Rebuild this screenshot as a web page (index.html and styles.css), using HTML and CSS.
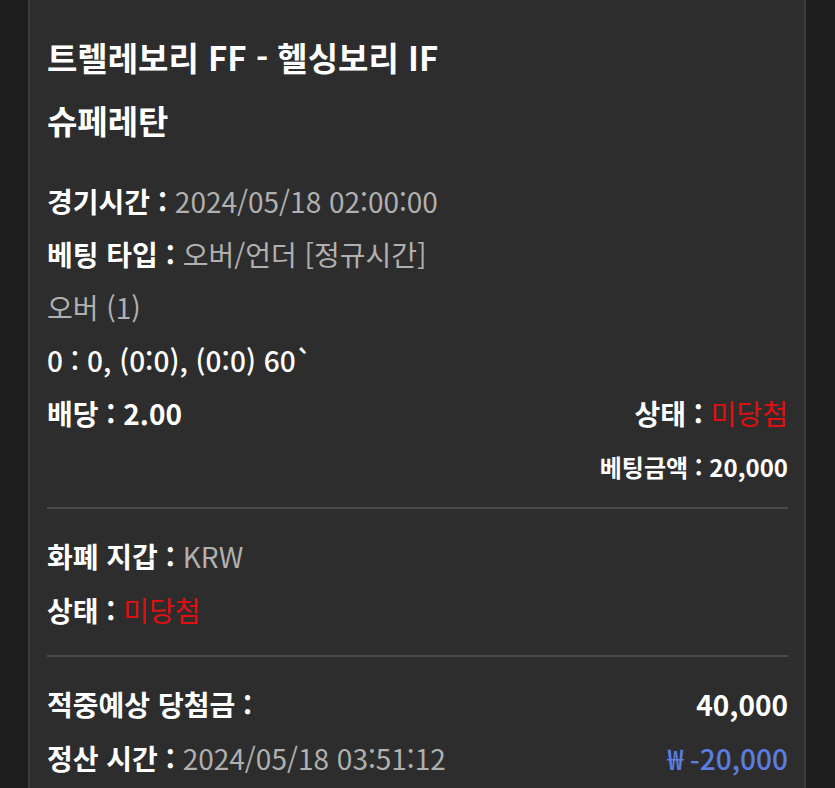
FILE: index.html
```html
<!DOCTYPE html>
<html lang="ko">
<head>
    <meta charset="UTF-8">
    <meta name="viewport" content="width=device-width, initial-scale=1.0">
    <title>베팅 내역</title>
    <link rel="stylesheet" href="styles.css">
</head>
<body>
    <div class="card">
        <div class="title">
            <div>트렐레보리 FF - 헬싱보리 IF</div>
            <div>슈페레탄</div>
        </div>

        <div class="section first">
            <div class="row"><span class="label">경기시간 :</span> <span class="value">2024/05/18 02:00:00</span></div>
            <div class="row"><span class="label">베팅 타입 :</span> <span class="value">오버/언더 [정규시간]</span></div>
            <div class="row"><span class="value">오버 (1)</span></div>
            <div class="row score">0 : 0, (0:0), (0:0) 60`</div>
            <div class="row split">
                <span class="label">배당 : 2.00</span>
                <span class="label">상태 : <span class="lose">미당첨</span></span>
            </div>
            <div class="row right small">
                <span class="label">베팅금액 : 20,000</span>
            </div>
        </div>

        <div class="section">
            <div class="row wide"><span class="label">화폐 지갑 :</span> <span class="value">KRW</span></div>
            <div class="row wide"><span class="label">상태 : <span class="lose">미당첨</span></span></div>
        </div>

        <div class="section last">
            <div class="row wide split">
                <span class="label">적중예상 당첨금 :</span>
                <span class="label">40,000</span>
            </div>
            <div class="row wide split">
                <span><span class="label">정산 시간 :</span> <span class="value">2024/05/18 03:51:12</span></span>
                <span class="minus">₩ -20,000</span>
            </div>
        </div>
    </div>
</body>
</html>
```

FILE: styles.css
```css
body {
    margin: 0;
    padding: 0;
    background: #1e1e1e;
    font-family: "Noto Sans CJK KR", "Noto Sans", sans-serif;
    color: #fff;
}

.card {
    margin: 0 29px 0 28px;
    min-height: 788px;
    box-sizing: border-box;
    background: #2d2d2d;
    border-left: 2px solid #3c3c3c;
    border-right: 2px solid #3c3c3c;
    padding: 26px 16px 0 17px;
}

.title {
    font-size: 33px;
    font-weight: 700;
    line-height: 63px;
}

.section {
    border-top: 2px solid #4a4a4a;
    padding: 20px 0 18px;
}

.section.first {
    border-top: none;
    padding-top: 23px;
    padding-bottom: 14px;
}

.row {
    font-size: 28px;
    line-height: 53px;
    height: 53px;
    white-space: nowrap;
}

.row.wide {
    line-height: 54px;
    height: 54px;
}

.label {
    font-weight: 700;
    color: #fff;
}

.value {
    font-weight: 400;
    color: #b0b0b0;
}

.score {
    font-weight: 500;
}

.split {
    display: flex;
    justify-content: space-between;
}

.right {
    text-align: right;
}

.small {
    font-size: 24px;
}

.lose {
    color: #e01010;
    font-weight: 400;
}

.minus {
    color: #5b7ee0;
    font-weight: 500;
}
```
